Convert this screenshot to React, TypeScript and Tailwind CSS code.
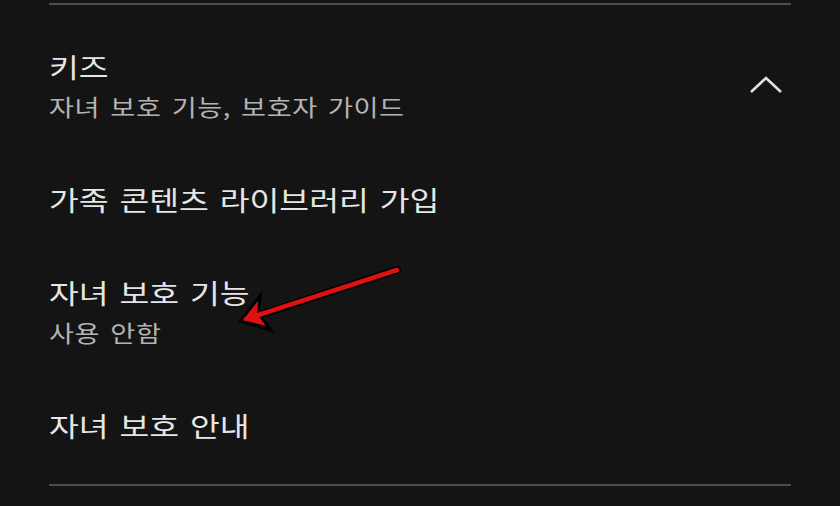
import React from "react";

const font = "font-['Noto_Sans_CJK_KR','Noto_Sans',sans-serif]";

const Title: React.FC<{ children: React.ReactNode }> = ({ children }) => (
  <div className="text-[27px] leading-[36px] text-[#e6e6e6]">
    <span className="inline-block origin-left scale-x-[1.2] whitespace-nowrap [word-spacing:3px]">
      {children}
    </span>
  </div>
);

const Sub: React.FC<{ children: React.ReactNode }> = ({ children }) => (
  <div className="text-[23px] leading-[30px] text-[#b3b3b3] tracking-[0.5px]">
    <span className="inline-block origin-left scale-x-[1.18] whitespace-nowrap [word-spacing:3px]">
      {children}
    </span>
  </div>
);

const App: React.FC = () => {
  return (
    <div className={`relative w-[840px] h-[506px] bg-[#141414] overflow-hidden ${font}`}>
      <div className="ml-[49px] w-[742px] pt-[3px]">
        <div className="border-t-2 border-[#4d4d4d]" />

        {/* 키즈 section header */}
        <div className="flex items-center justify-between pt-[44px]">
          <div>
            <Title>키즈</Title>
            <div className="mt-[6px]">
              <Sub>자녀 보호 기능, 보호자 가이드</Sub>
            </div>
          </div>
          <svg className="mr-[8px] w-[34px] h-[18px]" viewBox="0 0 34 18" fill="none">
            <polyline points="2,16 17,2 32,16" stroke="#e0e0e0" strokeWidth="2.6" />
          </svg>
        </div>

        <div className="mt-[61px]">
          <Title>가족 콘텐츠 라이브러리 가입</Title>
        </div>

        <div className="mt-[57px]">
          <Title>자녀 보호 기능</Title>
          <div className="mt-[6px]">
            <Sub>사용 안함</Sub>
          </div>
        </div>

        <div className="mt-[61px]">
          <Title>자녀 보호 안내</Title>
        </div>

        <div className="mt-[40px] border-t-2 border-[#4d4d4d]" />
      </div>

      {/* red annotation arrow */}
      <svg className="absolute left-[230px] top-[260px] w-[175px] h-[80px]" viewBox="0 0 175 80" fill="none">
        <line x1="167" y1="10" x2="36" y2="53" stroke="#000" strokeWidth="8" strokeLinecap="round" />
        <polygon points="8,62 32,31 30,53 45,73" fill="#000" />
        <line x1="167" y1="10" x2="16" y2="59" stroke="#e01010" strokeWidth="4.5" strokeLinecap="round" />
        <polygon points="13,60 28,41 27,54 36,66" fill="#e01010" />
      </svg>
    </div>
  );
};

export default App;
